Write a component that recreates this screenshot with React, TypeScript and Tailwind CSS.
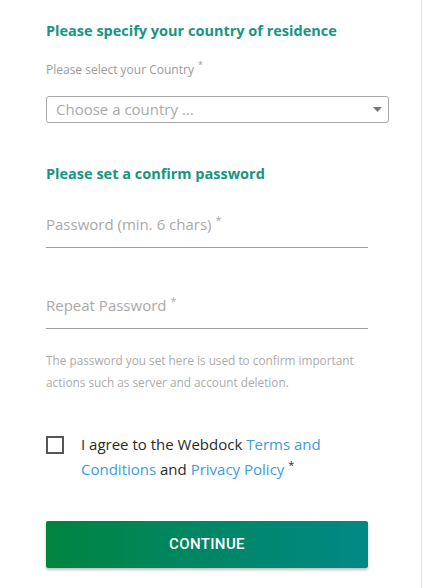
import { useState } from "react";

const font = { fontFamily: "'Open Sans', Lato, sans-serif" };

function Star({ size = "text-[11px]" }: { size?: string }) {
  return (
    <span className={`relative -top-[6px] ml-[4px] ${size} leading-none`}>*</span>
  );
}

export default function App() {
  const [agree, setAgree] = useState(false);

  return (
    <main
      className="relative h-[588px] w-[425px] overflow-hidden bg-white"
      style={font}
    >
      <div className="absolute right-[3px] top-0 h-full w-px bg-[#e3e3e3]" />
      <div className="flex w-[343px] flex-col pl-[46px] pt-[21px]">
        <h2 className="text-[14.5px] font-bold leading-5 text-[#16957f]">
          Please specify your country of residence
        </h2>
        <label className="mt-[21px] text-[12px] leading-4 text-[#9a9a9a]">
          Please select your Country<Star size="text-[9px]" />
        </label>
        <div className="mt-[18px] flex h-[27px] w-[343px] items-center justify-between rounded-[3px] border border-[#a8a8a8] pl-[9px] pr-[6px]">
          <span className="text-[15px] text-[#a9a9a9]">Choose a country ...</span>
          <svg width="9" height="5" viewBox="0 0 9 5">
            <path d="M0 0 L9 0 L4.5 5 Z" fill="#777" />
          </svg>
        </div>

        <h2 className="mt-[41px] text-[14.5px] font-bold leading-5 text-[#16957f]">
          Please set a confirm password
        </h2>

        <div className="mt-[30px] w-[322px] border-b border-[#9e9e9e] pb-[13px]">
          <div className="text-[15px] leading-5 text-[#a9a9a9]">
            Password (min. 6 chars)<Star />
          </div>
        </div>
        <div className="mt-[47px] w-[322px] border-b border-[#9e9e9e] pb-[13px]">
          <div className="text-[15px] leading-5 text-[#a9a9a9]">
            Repeat Password<Star />
          </div>
        </div>

        <p className="mt-[20px] w-[322px] text-[11.8px] leading-[22px] text-[#ababab]">
          The password you set here is used to confirm important actions such
          as server and account deletion.
        </p>

        <div className="mt-[39px] flex items-start">
          <button
            type="button"
            onClick={() => setAgree(!agree)}
            className="mt-[4px] flex h-[18px] w-[18px] shrink-0 items-center justify-center border-2 border-[#555] text-[12px] leading-none"
          >
            {agree ? "✓" : null}
          </button>
          <p className="ml-[17px] w-[250px] text-[15px] leading-[25px] text-[#2a2a2a]">
            I agree to the Webdock{" "}
            <a className="text-[#3d9be0]">Terms and Conditions</a> and{" "}
            <a className="text-[#3d9be0]">Privacy Policy</a>
            <Star />
          </p>
        </div>

        <button
          type="button"
          className="mt-[39px] h-[47px] w-[322px] rounded-[2px] bg-gradient-to-r from-[#00843f] to-[#008886] text-[15px] font-medium tracking-wide text-white shadow-[0_2px_3px_rgba(0,0,0,0.25)]"
          style={{ fontFamily: "Roboto, sans-serif" }}
        >
          CONTINUE
        </button>
      </div>
    </main>
  );
}
